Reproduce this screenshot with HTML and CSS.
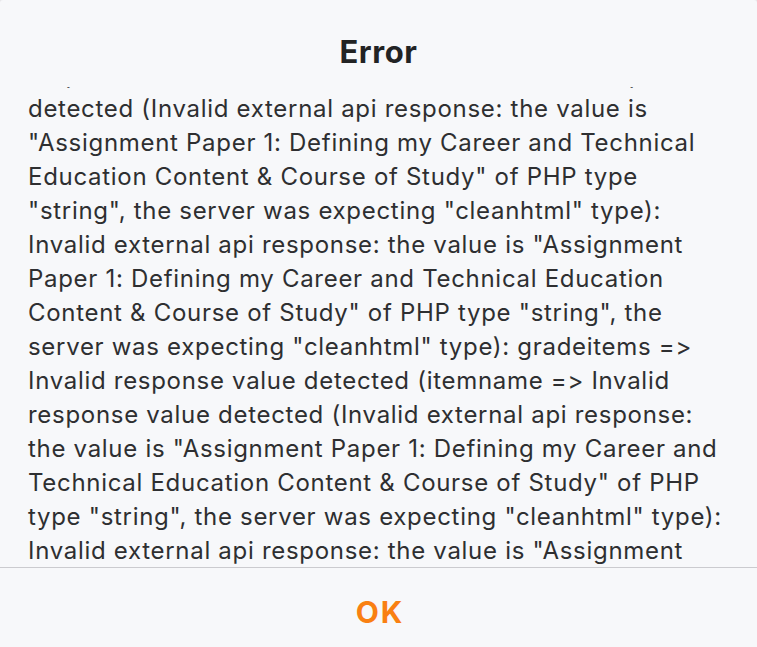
FILE: index.html
```html
<!DOCTYPE html>
<html lang="en">
<head>
<meta charset="utf-8">
<title>Error</title>
<link rel="stylesheet" href="styles.css">
</head>
<body>
<div class="alert">
  <div class="alert-header">
    <h1 class="alert-title">Error</h1>
  </div>
  <div class="alert-body" id="alertBody">
    <p class="alert-message">Invalid response value detected (gradeitems =&gt; Invalid<br>response value detected (itemname =&gt; Invalid response value<br>detected (Invalid external api response: the value is<br>"Assignment Paper 1: Defining my Career and Technical<br>Education Content &amp; Course of Study" of PHP type<br>"string", the server was expecting "cleanhtml" type):<br>Invalid external api response: the value is "Assignment<br>Paper 1: Defining my Career and Technical Education<br>Content &amp; Course of Study" of PHP type "string", the<br>server was expecting "cleanhtml" type): gradeitems =&gt;<br>Invalid response value detected (itemname =&gt; Invalid<br>response value detected (Invalid external api response:<br>the value is "Assignment Paper 1: Defining my Career and<br>Technical Education Content &amp; Course of Study" of PHP<br>type "string", the server was expecting "cleanhtml" type):<br>Invalid external api response: the value is "Assignment<br>Paper 1: Defining my Career and Technical Education<br>Content &amp; Course of Study" of PHP type "string", the<br>server was expecting "cleanhtml" type)</p>
  </div>
  <div class="alert-footer">
    <button class="alert-button" type="button">OK</button>
  </div>
</div>
<script src="script.js"></script>
</body>
</html>
```

FILE: styles.css
```css
html, body {
  margin: 0;
  padding: 0;
  height: 100%;
  background: #e6e6e8;
}

.alert {
  display: flex;
  flex-direction: column;
  height: 100vh;
  background: #f7f8fa;
  border-radius: 3px 3px 0 0;
  font-family: Inter, "Liberation Sans", sans-serif;
  font-feature-settings: "calt" 0, "liga" 0;
  color: #2e2f31;
}

.alert-header {
  height: 87px;
  flex: none;
  display: flex;
  align-items: center;
  justify-content: center;
}

.alert-title {
  margin: 0;
  padding-top: 16px;
  font-size: 31px;
  font-weight: 700;
  letter-spacing: 0.6px;
  color: #222324;
  line-height: 36px;
}

.alert-body {
  flex: 1;
  overflow: hidden;
  padding: 0 28px;
}

.alert-message {
  margin: 0;
  font-size: 24px;
  line-height: 34px;
  letter-spacing: 0.7px;
  white-space: nowrap;
}

.alert-footer {
  flex: none;
  height: 79px;
  border-top: 1px solid #cbcbcf;
  display: flex;
  align-items: center;
  justify-content: center;
}

.alert-button {
  border: 0;
  background: none;
  padding: 0 0 0 3px;
  margin-top: 8px;
  font-family: Inter, "Liberation Sans", sans-serif;
  font-size: 30px;
  font-weight: 700;
  letter-spacing: 2px;
  line-height: 36px;
  color: #f98012;
}
```

FILE: script.js
```js
document.getElementById('alertBody').scrollTop = 63;
```
